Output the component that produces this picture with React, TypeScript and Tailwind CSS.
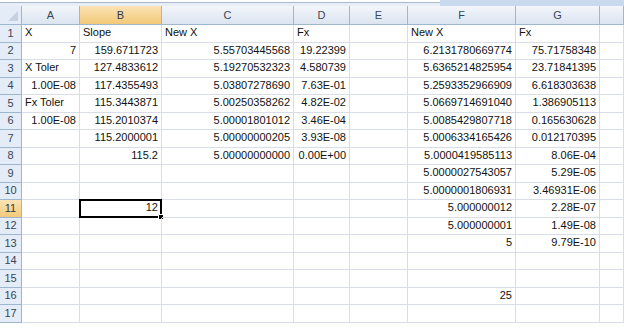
const cols = ["A", "B", "C", "D", "E", "F", "G", ""];

const labels = new Set(["X", "Slope", "New X", "Fx", "X Toler", "Fx Toler"]);

// A..H per row
const data: string[][] = [
  ["X", "Slope", "New X", "Fx", "", "New X", "Fx", ""],
  ["7", "159.6711723", "5.55703445568", "19.22399", "", "6.2131780669774", "75.71758348", ""],
  ["X Toler", "127.4833612", "5.19270532323", "4.580739", "", "5.6365214825954", "23.71841395", ""],
  ["1.00E-08", "117.4355493", "5.03807278690", "7.63E-01", "", "5.2593352966909", "6.618303638", ""],
  ["Fx Toler", "115.3443871", "5.00250358262", "4.82E-02", "", "5.0669714691040", "1.386905113", ""],
  ["1.00E-08", "115.2010374", "5.00001801012", "3.46E-04", "", "5.0085429807718", "0.165630628", ""],
  ["", "115.2000001", "5.00000000205", "3.93E-08", "", "5.0006334165426", "0.012170395", ""],
  ["", "115.2", "5.00000000000", "0.00E+00", "", "5.0000419585113", "8.06E-04", ""],
  ["", "", "", "", "", "5.0000027543057", "5.29E-05", ""],
  ["", "", "", "", "", "5.0000001806931", "3.46931E-06", ""],
  ["", "12", "", "", "", "5.000000012", "2.28E-07", ""],
  ["", "", "", "", "", "5.000000001", "1.49E-08", ""],
  ["", "", "", "", "", "5", "9.79E-10", ""],
  ["", "", "", "", "", "", "", ""],
  ["", "", "", "", "", "", "", ""],
  ["", "", "", "", "", "25", "", ""],
  ["", "", "", "", "", "", "", ""],
];

function ColHeader({ label }: { label: string }) {
  const active = label === "B";
  return (
    <div
      className={
        "flex items-center justify-center border-r border-b border-[#9eb6ce] text-[11px] " +
        (active
          ? "bg-gradient-to-b from-[#fbe3b4] to-[#f3c979] text-[#2b3a4a]"
          : "bg-gradient-to-b from-[#f3f6fb] to-[#dbe4f0] text-[#3a4656]")
      }
    >
      {label}
    </div>
  );
}

function RowHeader({ n }: { n: number }) {
  const active = n === 11;
  return (
    <div
      className={
        "flex items-center justify-center pb-[1px] border-r border-b border-[#9eb6ce] text-[11px] " +
        (active
          ? "bg-gradient-to-b from-[#fbe3b4] to-[#f3c979] text-[#2b3a4a]"
          : "bg-[#e4ecf7] text-[#3a4656]")
      }
    >
      {n}
    </div>
  );
}

function Cell({ value, selected }: { value: string; selected?: boolean }) {
  const left = labels.has(value);
  return (
    <div
      className={
        "relative flex items-center pb-[2px] px-[3px] border-r border-b border-[#d8dde8] whitespace-nowrap text-[11px] text-[#111] " +
        (left ? "justify-start" : "justify-end")
      }
    >
      {value}
      {selected && (
        <>
          <div className="absolute -left-[1px] -top-[1px] right-[-1px] bottom-[-1px] border-2 border-black" />
          <div className="absolute right-[-3px] bottom-[-3px] w-[6px] h-[6px] bg-black border border-white" />
        </>
      )}
    </div>
  );
}

export default function App() {
  return (
    <div className="w-[624px] h-[328px] overflow-hidden bg-white font-['Liberation_Sans',Arial,sans-serif]">
      <div className="flex h-[6px]">
        <div className="w-[440px] border-t-2 border-white">
          <div className="h-[1px] bg-[#a9b8cc]" />
          <div className="h-[3px] bg-[#e8eef6]" />
        </div>
        <div className="flex-1 bg-[#c9d9ee]" />
      </div>
      <div className="grid grid-cols-[22px_58px_82px_132px_56px_58px_108px_84px_1fr] grid-rows-[19px_18px_17px_18px_17px_18px_17px_18px_17px_18px_17px_18px_17px_18px_17px_18px_17px_18px]">
        <div className="relative border-r border-b border-[#9eb6ce] bg-[#e4ecf7]">
          <div className="absolute right-[3px] bottom-[3px] w-0 h-0 border-l-[10px] border-l-transparent border-b-[10px] border-b-[#c5d1e1]" />
        </div>
        {cols.map((c, i) => (
          <ColHeader key={i} label={c} />
        ))}
        {data.map((row, r) => (
          <div key={r} className="contents">
            <RowHeader n={r + 1} />
            {row.map((v, c) => (
              <Cell key={c} value={v} selected={r === 10 && c === 1} />
            ))}
          </div>
        ))}
      </div>
    </div>
  );
}
